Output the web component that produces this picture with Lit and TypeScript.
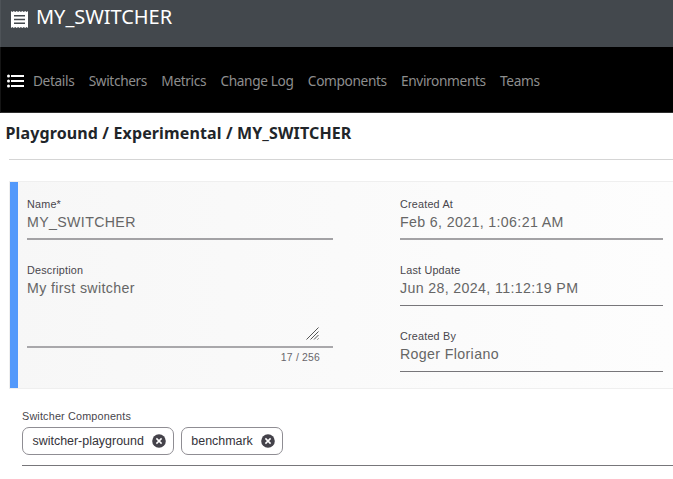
import { LitElement, html, css, svg } from "lit";
import { customElement, property } from "lit/decorators.js";

@customElement("form-field")
class FormField extends LitElement {
  @property() label = "";
  @property() value = "";
  @property({ type: Boolean }) multiline = false;
  @property({ type: Boolean }) soft = false;

  static styles = css`
    :host { display: block; font-family: "Liberation Sans", Arial, sans-serif; }
    .box { height: 45px; border-bottom: 1px solid #77767a; box-sizing: border-box; padding-top: 2px; }
    .box.soft { border-bottom: 2px solid #a3a2a5; }
    .box.tall { height: 87px; position: relative; border-bottom: 2px solid #a9a8ab; }
    .label { font-size: 10.8px; line-height: 14px; letter-spacing: 0.2px; color: #48464c; white-space: nowrap; }
    .value { font-size: 14.2px; line-height: 20px; margin-top: 1px; letter-spacing: 0.36px; color: #666; white-space: nowrap; }
    .grip { position: absolute; right: 14px; bottom: 6px; display: block; }
    .hint { font-size: 10.4px; line-height: 14px; letter-spacing: 0.2px; color: #68666b; text-align: right; padding: 3px 13px 0 0; }
  `;

  render() {
    return html`
      <div class="box ${this.multiline ? "tall" : this.soft ? "soft" : ""}">
        <div class="label">${this.label}</div>
        <div class="value">${this.value}</div>
        ${this.multiline
          ? html`<svg class="grip" width="13" height="13" viewBox="0 0 13 13" fill="none" stroke="#555" stroke-width="1">
              <path d="M0.5 12.5L12.5 0.5M4.5 12.5L12.5 4.5M8 12.5L12.5 8M11.5 12.5L12.5 11.5" />
            </svg>`
          : ""}
      </div>
      ${this.multiline ? html`<div class="hint">17 / 256</div>` : ""}
    `;
  }
}

@customElement("app-root")
class AppRoot extends LitElement {
  static styles = css`
    :host { display: block; height: 479px; overflow: hidden; background: #fff; font-family: "Noto Sans", "Open Sans", sans-serif; }
    .top { height: 47px; box-sizing: border-box; background: #43484d; display: flex; align-items: flex-start; padding: 3px 0 0 10px; border-left: 1px solid #4e5358; }
    .top svg { margin-top: 8px; flex: none; }
    .title { color: #fff; font-size: 20px; line-height: 28px; margin-left: 8px; letter-spacing: -0.03px; }
    .nav { height: 66px; box-sizing: border-box; background: #000; border-bottom: 1px solid #2e2e2e; border-left: 1px solid #151515; display: flex; align-items: center; padding: 3px 0 0 6px; color: #8e8e8e; font-size: 13.7px; line-height: 20px; }
    .nav svg { margin-right: 9px; flex: none; }
    .link { margin-right: 14.3px; white-space: nowrap; letter-spacing: -0.37px; }
    .crumbs { height: 46px; box-sizing: border-box; padding: 8px 0 0 5.5px; font-size: 16px; font-weight: 700; line-height: 24px; color: #212529; letter-spacing: 0.13px; white-space: nowrap; }
    .rule { height: 1px; background: #d5d5d5; margin-left: 9px; }
    .card { margin: 21px 0 0 9px; height: 208px; box-sizing: border-box; border: 1px solid #efefef; border-right: 0; background: linear-gradient(90deg, #f7f7f7, #fdfdfd); display: grid; grid-template-columns: 8px 315px 330px; }
    .bar { background: #5399fb; }
    .col { display: flex; flex-direction: column; gap: 21px; margin: 13px 0 0 9px; }
    .col.right { margin-left: 67px; }
    .list { margin: 20px 0 0 22px; font-family: "Liberation Sans", Arial, sans-serif; border-bottom: 1px solid #77767a; height: 56px; }
    .label { font-size: 10.8px; line-height: 14px; letter-spacing: 0.18px; color: #48464c; }
    .chips { display: flex; gap: 7px; margin-top: 4px; }
    .chip { box-sizing: border-box; height: 28px; border: 1px solid #8f8d93; border-radius: 7px; display: flex; align-items: center; gap: 8px; padding: 0 7px 0 9.5px; font-size: 12.45px; color: #35333a; white-space: nowrap; }
  `;

  private links = ["Details", "Switchers", "Metrics", "Change Log", "Components", "Environments", "Teams"];
  private components = ["switcher-playground", "benchmark"];

  private dot(y: number) {
    return svg`<circle cx="1.5" cy=${y} r="1.5"/><rect x="4" y=${y - 1} width="13" height="2"/>`;
  }

  render() {
    return html`
      <div class="top">
        <svg width="17" height="17" viewBox="0 0 17 17">
          <path fill="#fff" d="M0 0l1.4 1L2.8 0l1.4 1L5.7 0l1.4 1L8.5 0l1.4 1 1.4-1 1.5 1 1.4-1 1.4 1L17 0v17l-1.4-1-1.4 1-1.4-1-1.5 1-1.4-1-1.4 1-1.4-1-1.4 1-1.5-1-1.4 1-1.4-1L0 17z" />
          <path stroke="#43484d" stroke-width="1.5" d="M3 4.7h11M3 8.5h11M3 12.3h11" />
        </svg>
        <div class="title">MY_SWITCHER</div>
      </div>
      <div class="nav">
        <svg width="17" height="14" viewBox="0 0 17 14" fill="#fff">${[2, 7, 12].map((y) => this.dot(y))}</svg>
        ${this.links.map((l) => html`<span class="link">${l}</span>`)}
      </div>
      <div class="crumbs">Playground / Experimental / MY_SWITCHER</div>
      <div class="rule"></div>
      <div class="card">
        <div class="bar"></div>
        <div class="col">
          <form-field label="Name*" value="MY_SWITCHER" soft></form-field>
          <form-field label="Description" value="My first switcher" multiline></form-field>
        </div>
        <div class="col right">
          <form-field label="Created At" value="Feb 6, 2021, 1:06:21 AM" soft></form-field>
          <form-field label="Last Update" value="Jun 28, 2024, 11:12:19 PM"></form-field>
          <form-field label="Created By" value="Roger Floriano"></form-field>
        </div>
      </div>
      <div class="list">
        <div class="label">Switcher Components</div>
        <div class="chips">
          ${this.components.map(
            (c) => html`<div class="chip">
              <span>${c}</span>
              <svg width="14" height="14" viewBox="0 0 14 14">
                <circle cx="7" cy="7" r="6.8" fill="#44424a" />
                <path d="M4.4 4.4l5.2 5.2M9.6 4.4l-5.2 5.2" stroke="#fff" stroke-width="1.5" />
              </svg>
            </div>`
          )}
        </div>
      </div>
    `;
  }
}
